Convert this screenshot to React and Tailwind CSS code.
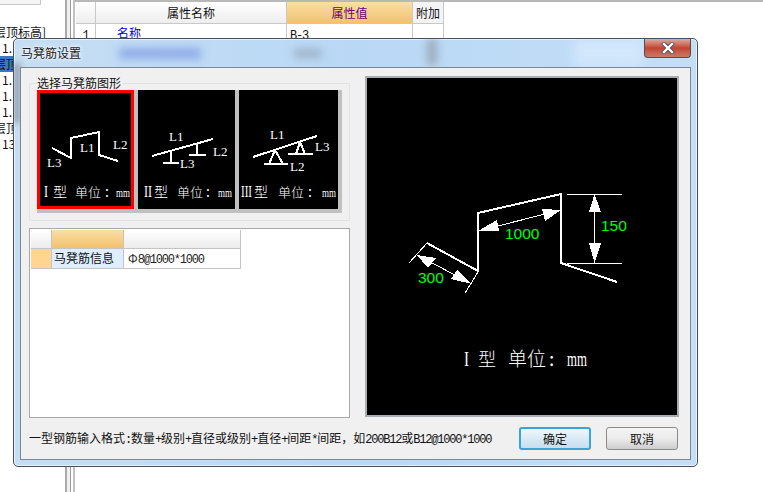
import React from 'react'

const cjk = "font-['Noto_Sans_CJK_SC','Liberation_Sans',sans-serif]"

// SimSun style text: ascii runs take half the width of a cjk char
const Txt = ({ children }) => {
  const runs = children.match(/[\x20-\x7e]+|[^\x20-\x7e]+/g) || []
  return runs.map((run, i) =>
    /^[\x20-\x7e]/.test(run) ? (
      <span key={i} className="font-['Liberation_Mono',monospace] tracking-[-1.2px]">{run}</span>
    ) : (
      <span key={i}>{run}</span>
    )
  )
}

const Caption = ({ roman, romanWidth, x, xType, xUnit, xColon, xMm, y = 197 }) => (
  <g fill="#fff" stroke="none">
    <text x={x} y={y} fontFamily="Liberation Serif, serif" fontSize="16" textLength={romanWidth} lengthAdjust="spacingAndGlyphs">{roman}</text>
    <text x={xType} y={y} fontFamily="Noto Sans CJK SC, sans-serif" fontSize="14" fontWeight="300">型</text>
    <text x={xUnit} y={y} fontFamily="Noto Sans CJK SC, sans-serif" fontSize="13" fontWeight="300">单位</text>
    <text x={xColon} y={y} fontFamily="Noto Sans CJK SC, sans-serif" fontSize="14">:</text>
    <text x={xMm} y={y} fontFamily="Liberation Serif, serif" fontSize="13" textLength="14" lengthAdjust="spacingAndGlyphs">mm</text>
  </g>
)

const Label = ({ x, y, children }) => (
  <text x={x} y={y} fill="#fff" stroke="none" fontFamily="Liberation Serif, serif" fontSize="13">{children}</text>
)

// thumbs are drawn in page coordinates, the viewBox cuts out the right part
const ThumbOne = () => (
  <div className="w-[97px] h-[119px] bg-black border-[3px] border-[#ff0000]">
    <svg viewBox="40 93 91 113" shapeRendering="crispEdges" className="block w-[91px] h-[113px]">
      <polyline points="52,148 71,158 71,138 99,132 99,155 118,161" fill="none" stroke="#fff" strokeWidth="2" />
      <Label x={47} y={167}>L3</Label>
      <Label x={80} y={152}>L1</Label>
      <Label x={113} y={149}>L2</Label>
      <Caption roman="I" romanWidth={4} x={44} xType={53} xUnit={75} xColon={105} xMm={116} />
    </svg>
  </div>
)

const ThumbTwo = () => (
  <div className="w-[97px] h-[119px] bg-black">
    <svg viewBox="138 90 97 119" shapeRendering="crispEdges" className="block w-[97px] h-[119px]">
      <g fill="none" stroke="#fff" strokeWidth="2">
        <line x1="152" y1="156" x2="213" y2="139" />
        <path d="M171 152V163M163 163H179M197 144V155M189 155H206" />
      </g>
      <Label x={169} y={141}>L1</Label>
      <Label x={213} y={156}>L2</Label>
      <Label x={180} y={168}>L3</Label>
      <Caption roman="II" romanWidth={8} x={144} xType={154} xUnit={177} xColon={206} xMm={218} />
    </svg>
  </div>
)

const ThumbThree = () => (
  <div className="w-[99px] h-[119px] bg-black">
    <svg viewBox="239 90 99 119" shapeRendering="crispEdges" className="block w-[99px] h-[119px]">
      <g fill="none" stroke="#fff" strokeWidth="2">
        <line x1="253" y1="157" x2="317" y2="136" />
        <path d="M275 150L269 164M275 150L283 164M264 164H288M300 142L296 154M300 142L305 154M288 154H313" />
      </g>
      <Label x={270} y={139}>L1</Label>
      <Label x={315} y={151}>L3</Label>
      <Label x={290} y={171}>L2</Label>
      <Caption roman="III" romanWidth={11} x={241} xType={254} xUnit={278} xColon={308} xMm={322} />
    </svg>
  </div>
)

const Preview = () => (
  <svg viewBox="367 78 310 337" shapeRendering="crispEdges" className="block w-[310px] h-[337px]">
    <polyline points="427,243 478,271 478,213 561,194 561,263 617,282" fill="none" stroke="#fff" strokeWidth="2" />
    <g stroke="#fff" strokeWidth="1" fill="none">
      <path d="M567 194.5H622M567 263.5H622M594.5 194V263" />
      <path d="M478 231L561 210" />
      <path d="M427 243L409 263M478 272L465 293M417 255L472 284" />
    </g>
    <g fill="#fff">
      <polygon points="594.5,194 589,212 601,212" />
      <polygon points="594.5,263 589,243 601,243" />
      <polygon points="478,231 497,220 499,231" />
      <polygon points="561,210 542,209 545,221" />
      <polygon points="417,255 436,258 428,268" />
      <polygon points="472,284 457,270 451,279" />
    </g>
    <g fill="#00ff00" fontFamily="Liberation Sans, sans-serif" fontSize="15.5">
      <text x="601" y="231">150</text>
      <text x="505" y="239">1000</text>
      <text x="418" y="283">300</text>
    </g>
    <g fill="#fff">
      <text x="464" y="366" fontFamily="Liberation Serif, serif" fontSize="22" textLength="5" lengthAdjust="spacingAndGlyphs">I</text>
      <text x="478" y="366" fontFamily="Noto Sans CJK SC, sans-serif" fontSize="18" fontWeight="300">型</text>
      <text x="508" y="366" fontFamily="Noto Sans CJK SC, sans-serif" fontSize="19" fontWeight="300">单位</text>
      <text x="549" y="366" fontFamily="Noto Sans CJK SC, sans-serif" fontSize="19">:</text>
      <text x="567" y="366" fontFamily="Liberation Serif, serif" fontSize="20" textLength="20" lengthAdjust="spacingAndGlyphs">mm</text>
    </g>
  </svg>
)

const Dialog = () => (
  <div className={`absolute left-[13px] top-[38px] w-[685px] h-[429px] rounded-[5px] border border-[#47505c] bg-gradient-to-r from-[#c6def3] via-[#b9d8f6] to-[#c4def6] overflow-hidden flex flex-col px-[6px] pb-[6px] shadow-[inset_0_0_0_1px_rgba(255,255,255,0.6)] ${cjk}`}>
    {/* glass: the window below shows through blurred */}
    <div className="absolute left-[105px] top-[9px] w-[82px] h-[11px] bg-[#8fabe8] blur-[4px]" />
    <div className="absolute left-[280px] top-[10px] w-[28px] h-[9px] bg-[#9fb3c7] blur-[4px]" />
    <div className="absolute left-[413px] top-[0px] w-[10px] h-[26px] bg-[#9aabb9] blur-[4px]" />
    <div className="absolute left-[560px] top-[0px] w-[70px] h-[28px] bg-[#d2e7fb] blur-[6px]" />
    <div className="absolute left-0 top-[24px] w-[6px] h-[60px] bg-[#8a98a8] blur-[3px]" />

    <div className="relative h-[28px] shrink-0 flex items-start justify-between">
      <span className="ml-[1px] mt-[7px] text-[12px] leading-[14px] text-[#1a1a1a] [text-shadow:0_0_5px_#ffffff,0_0_3px_#ffffff]">马凳筋设置</span>
      <div className="w-[47px] h-[19px] rounded-b-[4px] border border-t-0 border-[#5a4a4c] bg-gradient-to-b from-[#dcaaa2] via-[#c2432f] to-[#c67a6c] flex items-center justify-center">
        <svg width="14" height="12" viewBox="0 0 14 12">
          <path d="M3 2L11 10M11 2L3 10" stroke="#3e4a5c" strokeWidth="4" strokeLinecap="square" />
          <path d="M3 2L11 10M11 2L3 10" stroke="#ffffff" strokeWidth="2.4" strokeLinecap="square" />
        </svg>
      </div>
    </div>

    <div className="relative flex-1 border border-[#7d8794] bg-[#f0f0f0] pl-[8px] pr-[12px] pt-[8px] flex flex-col">
      <div className="flex gap-[15px] h-[342px]">
        <div className="w-[321px] flex flex-col">
          <div className="mt-[7px] h-[138px] w-[321px] rounded-[2px] border border-[#dfe2e5] px-[7px] shrink-0">
            <div className="-mt-[8px] w-fit bg-[#f0f0f0] pr-[2px] text-[12px] leading-[14px] text-[#111]">选择马凳筋图形</div>
            <div className="w-[305px] flex gap-[4px] bg-[#c0c0c0] pr-[4px] pb-[4px]">
              <ThumbOne />
              <ThumbTwo />
              <ThumbThree />
            </div>
          </div>
          <div className="mt-[7px] flex-1 border border-[#a9a9a9] bg-white pl-[1px] pt-[1px]">
            <div className="grid grid-cols-[21px_72px_117px] grid-rows-[19px_20px] w-fit text-[12px] leading-[18px]">
              <div className="bg-gradient-to-b from-white to-[#ececec] border-r border-b border-[#c4c4c4]" />
              <div className="bg-gradient-to-b from-[#f9dea6] to-[#f3c26b] border-r border-b border-[#c4c4c4]" />
              <div className="bg-gradient-to-b from-white to-[#ececec] border-r border-b border-[#c4c4c4]" />
              <div className="bg-[#ffd58f] border-r border-b border-[#c4c4c4]" />
              <div className="bg-[#deeeff] border-r border-b border-[#c4c4c4] pl-[2px] text-[#111]">马凳筋信息</div>
              <div className="bg-white border-r border-b border-[#c4c4c4] pl-[4px] text-[#222]"><Txt>Φ8@1000*1000</Txt></div>
            </div>
          </div>
        </div>
        <div className="w-[314px] h-[341px] border-2 border-[#a9adb2] bg-black">
          <Preview />
        </div>
      </div>
      <div className="flex items-start justify-between mt-[9px]">
        <div className="mt-[4px] text-[12px] leading-[14px] text-[#111] whitespace-nowrap">
          <Txt>一型钢筋输入格式:数量+级别+直径或级别+直径+间距*间距，如200B12或B12@1000*1000</Txt>
        </div>
        <div className="flex gap-[15px]">
          <button className="w-[72px] h-[23px] rounded-[3px] border-2 border-[#3ba3d8] bg-gradient-to-b from-[#eff6fb] to-[#c7deee] text-[12px] text-[#111]">确定</button>
          <button className="w-[72px] h-[23px] rounded-[3px] border border-[#8b8b8b] bg-gradient-to-b from-[#f5f5f5] via-[#ebebeb] to-[#cdcdcd] text-[12px] text-[#111]">取消</button>
        </div>
      </div>
    </div>
  </div>
)

const rows = [
  { text: '层顶标高]' },
  { text: '1.' },
  { text: '层顶', selected: true },
  { text: '1.' },
  { text: '1.' },
  { text: '1.' },
  { text: '层顶' },
  { text: '13' },
]

const App = () => (
  <div className={`relative w-[763px] h-[492px] overflow-hidden bg-white flex ${cjk}`}>
    <div className="w-[65px] shrink-0 overflow-hidden text-[12px] text-[#111]">
      <div className="w-[41px] h-[5px] bg-[#f4f4f4] border-r border-b border-[#c8c8c8]" />
      <div className="mt-[19px]">
        {rows.map((row, i) => (
          <div
            key={i}
            className={`h-[16px] leading-[16px] whitespace-nowrap ${row.selected ? 'bg-[#3d74c4]' : ''}`}
          >
            {/^\d/.test(row.text) ? (
              <span className="ml-[2px]">{row.text}</span>
            ) : (
              <span className="-ml-[6px]">{row.text}</span>
            )}
          </div>
        ))}
      </div>
    </div>
    <div className="w-[10px] shrink-0 flex">
      <div className="w-[2px] bg-[#a9a9a9]" />
      <div className="w-[3px] bg-[#f0f0f0]" />
      <div className="w-[1px] bg-[#9a9a9a]" />
      <div className="w-[2px] bg-white" />
      <div className="w-[2px] bg-[#c0c0c0]" />
    </div>
    <div className="flex-1 border-t-2 border-[#b8b8b8] text-[12px] text-[#111]">
      <div className="grid grid-cols-[1px_20px_191px_126px_31px] grid-rows-[22px_16px] w-fit">
        <div />
        <div className="bg-gradient-to-b from-white to-[#eeeeee] border-r border-b border-[#c8c8c8]" />
        <div className="bg-gradient-to-b from-white to-[#eeeeee] border-r border-b border-[#c8c8c8] flex items-center justify-center">属性名称</div>
        <div className="bg-gradient-to-b from-[#f9dea6] to-[#f3c26b] border-r border-b border-[#c8c8c8] flex items-center justify-center text-[#6b0080]">属性值</div>
        <div className="bg-[#f4f4f4] border-r border-b border-[#c8c8c8] flex items-center justify-center">附加</div>
        <div />
        <div className="border-r border-[#c8c8c8] text-center leading-[20px]"><Txt>1</Txt></div>
        <div className="border-r border-[#c8c8c8] pl-[21px] leading-[18px] text-[#0000ee] underline">名称</div>
        <div className="border-r border-[#c8c8c8] pl-[3px] leading-[20px]"><Txt>B-3</Txt></div>
        <div className="border-r border-[#c8c8c8]" />
      </div>
    </div>
    <Dialog />
  </div>
)

export default App
